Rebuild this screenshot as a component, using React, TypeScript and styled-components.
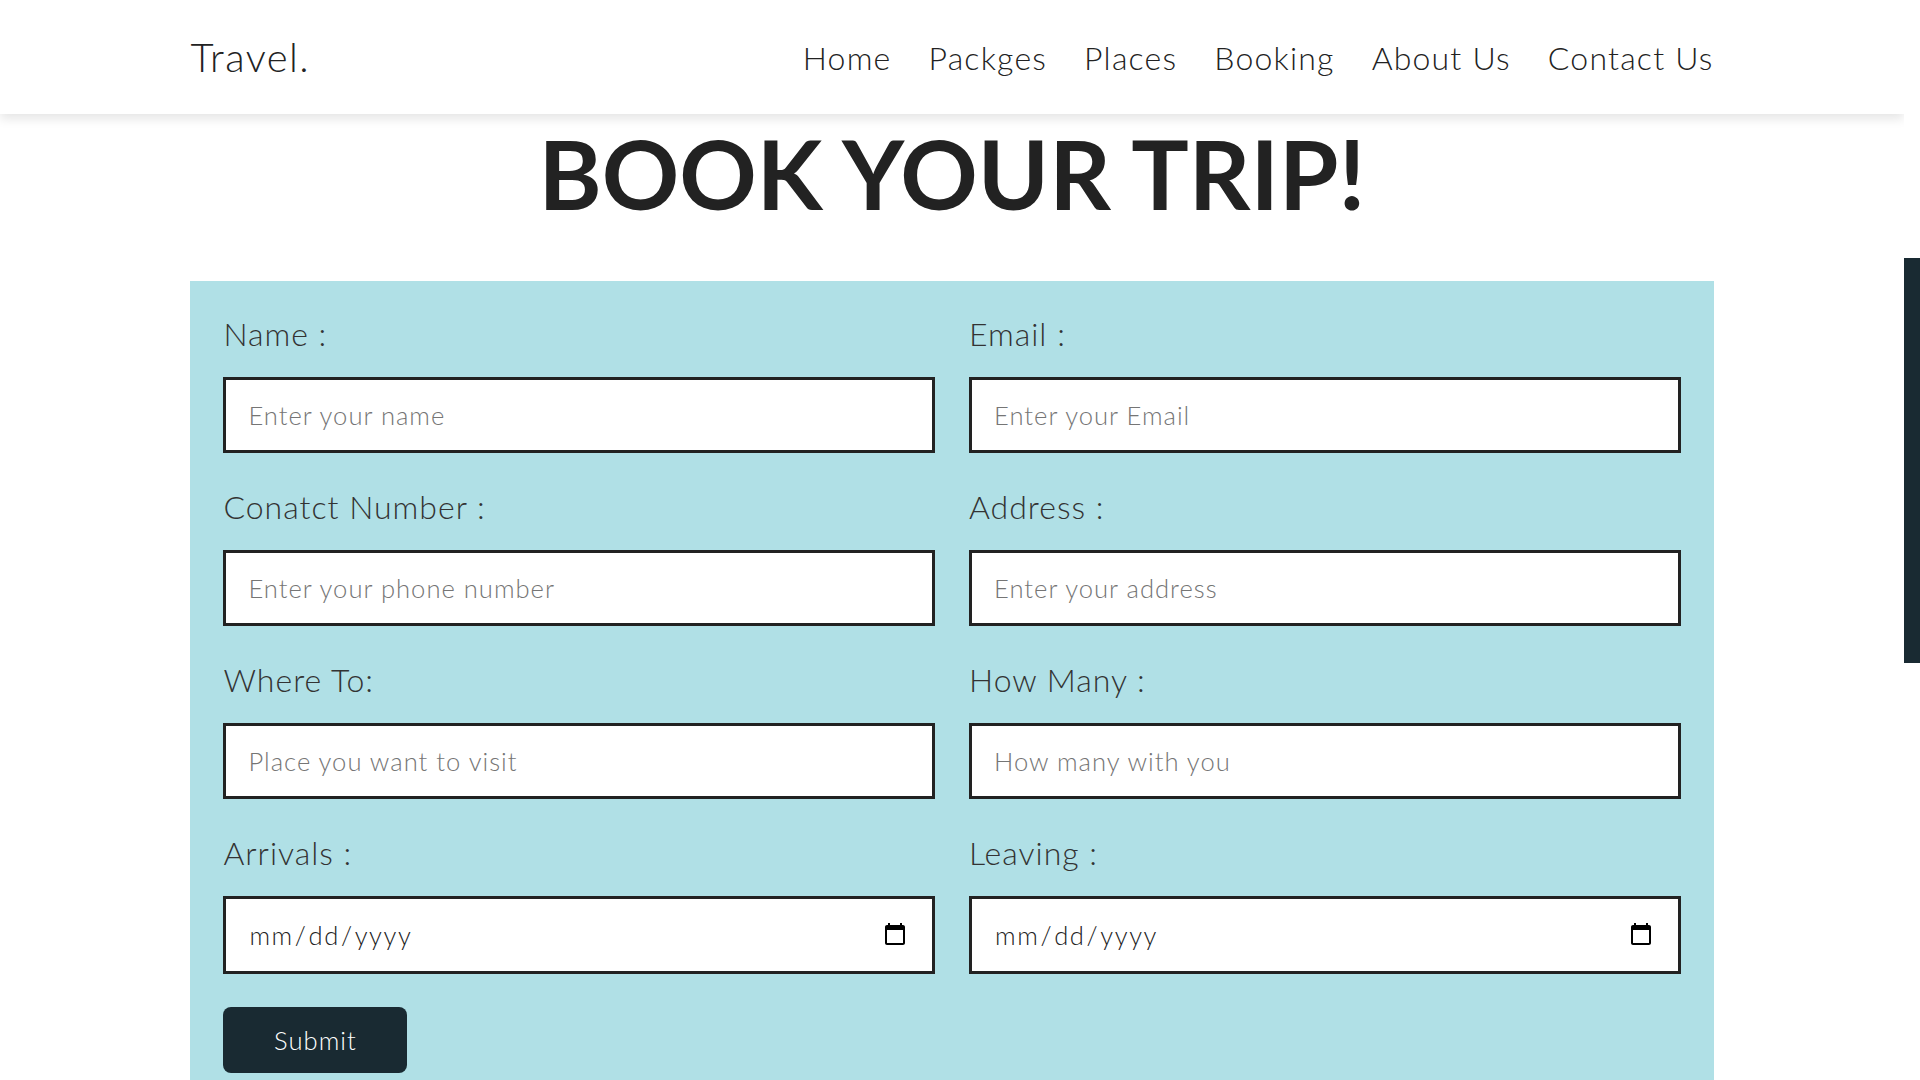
import React from "react";
import styled, { createGlobalStyle } from "styled-components";

const GlobalStyle = createGlobalStyle`
  *, *::before, *::after { box-sizing: border-box; }
  html, body { margin: 0; padding: 0; height: 100%; overflow: hidden; background: #fff; }
  body { font-family: Lato, "Noto Sans", sans-serif; color: #222; }
`;

const Shell = styled.div`
  display: flex;
  height: 100vh;
  overflow: hidden;
`;

const Viewport = styled.div`
  flex: 1;
  min-width: 0;
  display: flex;
  flex-direction: column;
  overflow: hidden;
`;

const ScrollRail = styled.div`
  width: 16px;
  flex-shrink: 0;
  background: #fff;
  padding-top: 258px;
`;

const ScrollThumb = styled.div`
  height: 405px;
  background: #192a32;
`;

const Header = styled.header`
  height: 114px;
  flex-shrink: 0;
  display: flex;
  align-items: center;
  justify-content: space-between;
  padding: 0 10%;
  background: #fff;
  box-shadow: 0 5px 10px rgba(0, 0, 0, 0.1);
  position: relative;
  z-index: 1;
`;

const Logo = styled.a`
  font-size: 40px;
  font-weight: 300;
  letter-spacing: 1.4px;
  color: #222;
  text-decoration: none;
`;

const Nav = styled.nav`
  display: flex;
  gap: 37px;
`;

const NavLink = styled.a`
  font-size: 32px;
  font-weight: 300;
  letter-spacing: 1.2px;
  color: #222;
  text-decoration: none;
`;

const Section = styled.section`
  padding: 0 10%;
`;

const Title = styled.h1`
  margin: 1px 0 0;
  font-size: 96px;
  line-height: 1.2;
  font-weight: 700;
  text-align: center;
  color: #222;
`;

const FormCard = styled.form`
  margin-top: 51px;
  background: #b0e0e6;
  padding: 33px;
`;

const Grid = styled.div`
  display: grid;
  grid-template-columns: 1fr 1fr;
  column-gap: 34px;
  row-gap: 34px;
`;

const Field = styled.div`
  display: flex;
  flex-direction: column;
`;

const Label = styled.label`
  font-size: 32px;
  line-height: 40px;
  font-weight: 300;
  letter-spacing: 1px;
  color: #333;
  margin-bottom: 23px;
`;

const Input = styled.input<{ $date?: boolean }>`
  height: ${(p) => (p.$date ? "78px" : "76px")};
  width: 100%;
  border: 3px solid #222;
  background: #fff;
  padding: 0 22px;
  font-family: inherit;
  font-size: 25.6px;
  font-weight: 300;
  letter-spacing: ${(p) => (p.$date ? "1.6px" : "1px")};
  color: #222;
  outline: none;
  &::placeholder { color: #757575; }
`;

const SubmitButton = styled.button`
  margin-top: 33px;
  width: 184px;
  height: 66px;
  border: none;
  border-radius: 8px;
  background: #192a32;
  color: #fff;
  font-family: inherit;
  font-size: 25.6px;
  font-weight: 300;
  letter-spacing: 1px;
  cursor: pointer;
`;

const navItems = ["Home", "Packges", "Places", "Booking", "About Us", "Contact Us"];

const fields: { label: string; type: string; placeholder?: string }[] = [
  { label: "Name :", type: "text", placeholder: "Enter your name" },
  { label: "Email :", type: "email", placeholder: "Enter your Email" },
  { label: "Conatct Number :", type: "text", placeholder: "Enter your phone number" },
  { label: "Address :", type: "text", placeholder: "Enter your address" },
  { label: "Where To:", type: "text", placeholder: "Place you want to visit" },
  { label: "How Many :", type: "text", placeholder: "How many with you" },
  { label: "Arrivals :", type: "date" },
  { label: "Leaving :", type: "date" },
];

export default function App() {
  return (
    <>
      <GlobalStyle />
      <Shell>
        <Viewport>
          <Header>
            <Logo href="#">Travel.</Logo>
            <Nav>
              {navItems.map((n) => (
                <NavLink key={n} href="#">{n}</NavLink>
              ))}
            </Nav>
          </Header>
          <Section>
            <Title>BOOK YOUR TRIP!</Title>
            <FormCard onSubmit={(e) => e.preventDefault()}>
              <Grid>
                {fields.map((f, i) => (
                  <Field key={i}>
                    <Label htmlFor={`f${i}`}>{f.label}</Label>
                    <Input id={`f${i}`} type={f.type} placeholder={f.placeholder} $date={f.type === "date"} />
                  </Field>
                ))}
              </Grid>
              <SubmitButton type="submit">Submit</SubmitButton>
            </FormCard>
          </Section>
        </Viewport>
        <ScrollRail>
          <ScrollThumb />
        </ScrollRail>
      </Shell>
    </>
  );
}
